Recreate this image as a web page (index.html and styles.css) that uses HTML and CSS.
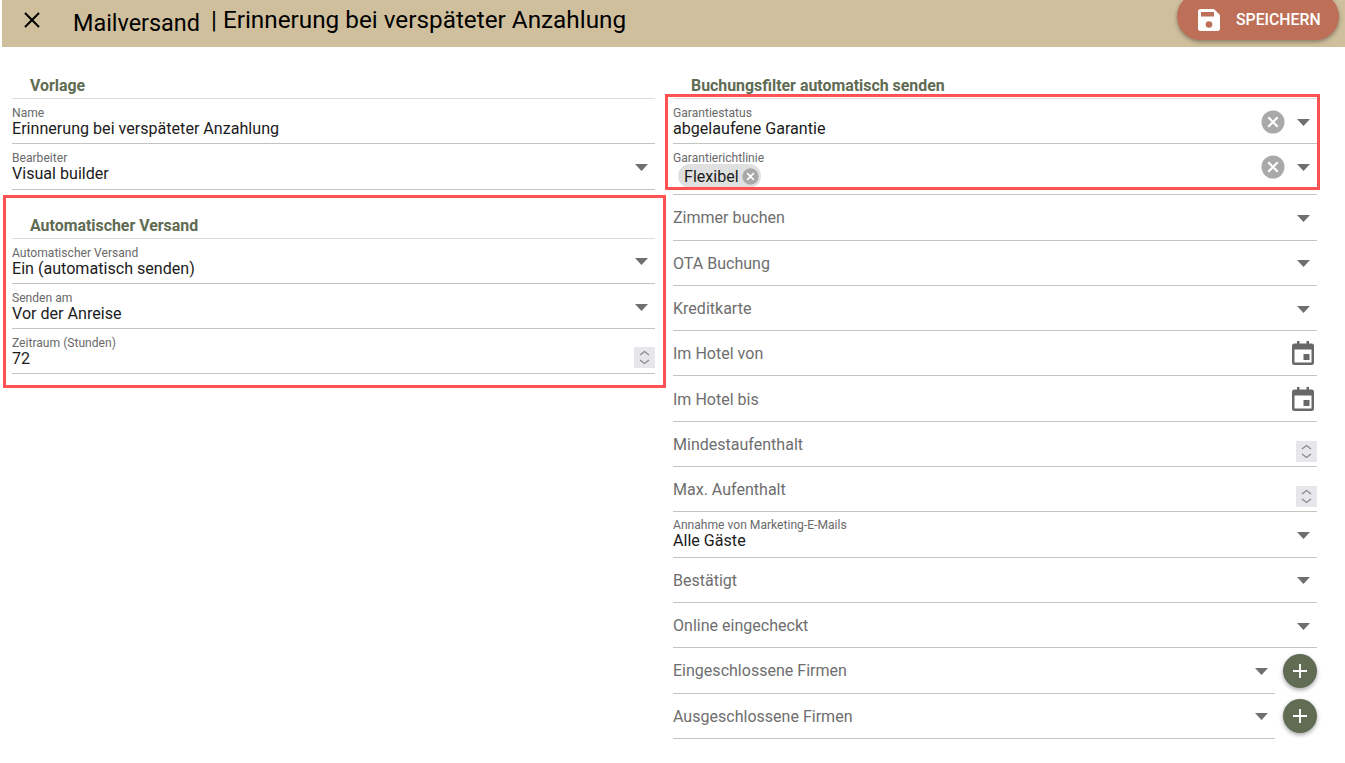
FILE: index.html
```html
<!DOCTYPE html>
<html lang="de">
<head>
<meta charset="utf-8">
<title>Mailversand</title>
<link rel="stylesheet" href="styles.css">
</head>
<body>
<svg class="defs" width="0" height="0" aria-hidden="true">
  <symbol id="arrow" viewBox="0 0 13 7"><path d="M0 0h13L6.500 7z" fill="#6f6f6f"/></symbol>
  <symbol id="clear" viewBox="0 0 24 24"><circle cx="12" cy="12" r="11.500" fill="#a9a9a9"/><path d="M7.300 7.300l9.400 9.400M16.700 7.300l-9.400 9.400" stroke="#fff" stroke-width="2.200" fill="none"/></symbol>
  <symbol id="cal" viewBox="0 0 22 24"><path d="M5 0h2.500v2.500h7V0H17v2.500h2.500A2.500 2.500 0 0 1 22 5v16.500a2.500 2.500 0 0 1-2.500 2.500h-17A2.500 2.500 0 0 1 0 21.500V5a2.500 2.500 0 0 1 2.500-2.500H5zM2.500 8.500v13h17v-13z" fill="#686868"/><rect x="11.500" y="13" width="6" height="6" fill="#686868"/></symbol>
  <symbol id="spin" viewBox="0 0 21 21"><rect width="21" height="21" fill="#e6e6eb"/><path d="M6 8l4.500-3.500L15 8M6 13l4.500 3.500L15 13" fill="none" stroke="#8b8b8b" stroke-width="1.300"/></symbol>
</svg>
<header class="topbar">
  <svg class="close" viewBox="0 0 16 16" aria-hidden="true"><path d="M1 1l14 14M15 1L1 15" stroke="#000" stroke-width="2" fill="none"/></svg>
  <span class="app">Mailversand</span>
  <span class="title">| Erinnerung bei verspäteter Anzahlung</span>
  <button class="save" type="button">
    <svg class="save-icon" viewBox="0 0 22 22" aria-hidden="true"><path d="M2.500 0H16l6 6v13.500a2.500 2.500 0 0 1-2.500 2.500h-17A2.500 2.500 0 0 1 0 19.500v-17A2.500 2.500 0 0 1 2.500 0z" fill="#fff"/><rect x="3" y="3" width="13" height="4.500" fill="#bd6f58"/><circle cx="11" cy="15.500" r="3.300" fill="#bd6f58"/></svg>
    SPEICHERN
  </button>
</header>
<main class="page">
  <div class="col">
    <section class="sec">
      <h2 class="head">Vorlage</h2>
      <div class="row"><div class="txt"><label class="lab">Name</label><div class="val">Erinnerung bei verspäteter Anzahlung</div></div></div>
      <div class="row"><div class="txt"><label class="lab">Bearbeiter</label><div class="val">Visual builder</div></div><svg class="arrow"><use href="#arrow"/></svg></div>
    </section>
    <section class="sec sec-auto">
      <h2 class="head">Automatischer Versand</h2>
      <div class="row"><div class="txt"><label class="lab">Automatischer Versand</label><div class="val">Ein (automatisch senden)</div></div><svg class="arrow"><use href="#arrow"/></svg></div>
      <div class="row"><div class="txt"><label class="lab">Senden am</label><div class="val">Vor der Anreise</div></div><svg class="arrow"><use href="#arrow"/></svg></div>
      <div class="row"><div class="txt"><label class="lab">Zeitraum (Stunden)</label><div class="val">72</div></div><svg class="spin"><use href="#spin"/></svg></div>
      <div class="mark mark-left"></div>
    </section>
  </div>
  <div class="col">
    <section class="sec">
      <h2 class="head">Buchungsfilter automatisch senden</h2>
      <div class="row"><div class="txt"><label class="lab">Garantiestatus</label><div class="val">abgelaufene Garantie</div></div><svg class="clear"><use href="#clear"/></svg><svg class="arrow"><use href="#arrow"/></svg></div>
      <div class="row row-chip"><div class="txt"><label class="lab">Garantierichtlinie</label><div class="chip">Flexibel<svg class="chip-x" viewBox="0 0 24 24"><use href="#clear"/></svg></div></div><svg class="clear"><use href="#clear"/></svg><svg class="arrow"><use href="#arrow"/></svg></div>
      <div class="mark mark-right"></div>
      <div class="row empty"><span class="ph">Zimmer buchen</span><svg class="arrow"><use href="#arrow"/></svg></div>
      <div class="row empty"><span class="ph">OTA Buchung</span><svg class="arrow"><use href="#arrow"/></svg></div>
      <div class="row empty"><span class="ph">Kreditkarte</span><svg class="arrow"><use href="#arrow"/></svg></div>
      <div class="row empty"><span class="ph">Im Hotel von</span><svg class="cal"><use href="#cal"/></svg></div>
      <div class="row empty"><span class="ph">Im Hotel bis</span><svg class="cal"><use href="#cal"/></svg></div>
      <div class="row empty"><span class="ph">Mindestaufenthalt</span><svg class="spin spin-low"><use href="#spin"/></svg></div>
      <div class="row empty"><span class="ph">Max. Aufenthalt</span><svg class="spin spin-low"><use href="#spin"/></svg></div>
      <div class="row row-mail"><div class="txt"><label class="lab">Annahme von Marketing-E-Mails</label><div class="val">Alle Gäste</div></div><svg class="arrow"><use href="#arrow"/></svg></div>
      <div class="row empty"><span class="ph">Bestätigt</span><svg class="arrow"><use href="#arrow"/></svg></div>
      <div class="row empty"><span class="ph">Online eingecheckt</span><svg class="arrow"><use href="#arrow"/></svg></div>
      <div class="add-row">
        <div class="row empty"><span class="ph">Eingeschlossene Firmen</span><svg class="arrow"><use href="#arrow"/></svg></div>
        <button class="fab" type="button" aria-label="Hinzufügen"><svg viewBox="0 0 12 12"><path d="M6 0v12M0 6h12" stroke="#fff" stroke-width="1.600"/></svg></button>
      </div>
      <div class="add-row">
        <div class="row empty"><span class="ph">Ausgeschlossene Firmen</span><svg class="arrow"><use href="#arrow"/></svg></div>
        <button class="fab" type="button" aria-label="Hinzufügen"><svg viewBox="0 0 12 12"><path d="M6 0v12M0 6h12" stroke="#fff" stroke-width="1.600"/></svg></button>
      </div>
    </section>
  </div>
</main>
</body>
</html>
```
FILE: styles.css
```css
* { box-sizing: border-box; }
html, body { margin: 0; height: 100%; overflow: hidden; }
body { background: #fff; font-family: Roboto, "Liberation Sans", sans-serif; color: #1b1b1b; }
.defs { position: absolute; }

.topbar {
  height: 47px;
  margin-left: 2px;
  background: #cfbf9d;
  display: flex;
  align-items: flex-start;
  color: #000;
}
.close { width: 16px; height: 16px; margin: 12px 0 0 22px; }
.app { font-size: 23.400px; line-height: 28px; margin: 9px 0 0 33px; }
.title { font-size: 24.300px; line-height: 28px; margin: 6px 0 0 11px; flex: 1; }
.save {
  width: 162px;
  height: 47px;
  margin: -7px 6px 0 0;
  border: 0;
  border-radius: 24px;
  background: #bd6f58;
  color: #fff;
  font: 500 15.800px Roboto, sans-serif;
  display: flex;
  align-items: center;
  gap: 16px;
  padding: 6px 0 0 21px;
  box-shadow: 0 2px 4px rgba(0, 0, 0, .35);
}
.save-icon { width: 22px; height: 22px; }

.page {
  display: grid;
  grid-template-columns: 643px 644px;
  column-gap: 18px;
  padding: 0 0 0 12px;
}
.sec { position: relative; }
.sec-auto { margin-top: 4px; }
.head {
  margin: 0;
  height: 52px;
  padding: 31px 0 0 18px;
  font-size: 15.900px;
  line-height: 16px;
  font-weight: 700;
  color: #5f6b52;
  border-bottom: 1px solid #dcdcdc;
}
.sec-auto .head { height: 45px; padding-top: 24px; }
.row {
  height: 45.300px;
  border-bottom: 1px solid #c4c4c4;
  display: flex;
  align-items: center;
}
.row-chip { height: 51px; }
.txt { flex: 1; min-width: 0; align-self: flex-start; padding-top: 7px; }
.row-mail .txt { padding-top: 6px; }
.lab { display: block; font-size: 12.100px; line-height: 14px; color: #6a6a6a; }
.val { font-size: 16.100px; line-height: 17px; color: #1b1b1b; }
.ph { flex: 1; font-size: 16.050px; color: #6e6e6e; padding-top: 1px; }
.arrow { width: 13px; height: 7px; flex: none; margin: 2px 7px 0 0; }
.clear { width: 24px; height: 24px; flex: none; margin: 0 12px 0 0; }
.row:has(.clear) { align-items: flex-start; }
.row:has(.clear) .clear { margin-top: 11px; }
.row:has(.clear) .arrow { margin-top: 20px; }
.cal { width: 22px; height: 24px; flex: none; margin-right: 3px; }
.spin { width: 21px; height: 21px; flex: none; margin-top: 12px; }
.spin-low { margin-top: 15px; }
.chip {
  display: inline-flex;
  align-items: center;
  height: 24px;
  margin: -1px 0 0 5px;
  padding: 0 2px 0 6px;
  border-radius: 12px;
  background: #e0e0e0;
  font-size: 16.100px;
  color: #1b1b1b;
  gap: 3px;
}
.chip-x { width: 17px; height: 17px; }
.add-row { display: flex; gap: 8px; align-items: center; }
.add-row .row { flex: 1; min-width: 0; }
.fab {
  width: 34px;
  height: 34px;
  flex: none;
  padding: 10px;
  border: 0;
  border-radius: 50%;
  background: #616c55;
  box-shadow: 0 2px 4px rgba(0, 0, 0, .35);
  display: block;
}
.fab svg { display: block; width: 14px; height: 14px; }

.mark { position: absolute; border: 3px solid #ff5252; pointer-events: none; }
.mark-left { left: -9px; right: -11px; top: 1px; bottom: -14px; }
.mark-right { left: -8px; right: -3px; top: 47px; height: 96px; }
```
